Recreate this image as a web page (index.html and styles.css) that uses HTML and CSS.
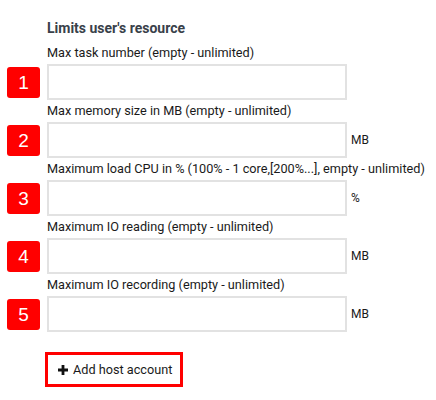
FILE: index.html
```html
<!DOCTYPE html>
<html lang="en">

<head>
    <meta charset="UTF-8">
    <meta name="viewport" content="width=device-width, initial-scale=1.0">
    <title>limits</title>
    <link rel="stylesheet" href="styles.css">
</head>

<body>
    <div class="limits">
        <h4 class="limits-title">Limits user's resource</h4>

        <div class="field">
            <label class="field-label">Max task number (empty - unlimited)</label>
            <div class="field-row">
                <span class="mark">1</span>
                <input class="field-input" type="text">
            </div>
        </div>

        <div class="field">
            <label class="field-label">Max memory size in MB (empty - unlimited)</label>
            <div class="field-row">
                <span class="mark">2</span>
                <input class="field-input" type="text">
                <span class="unit">MB</span>
            </div>
        </div>

        <div class="field">
            <label class="field-label">Maximum load CPU in % (100% - 1 core,[200%...], empty - unlimited)</label>
            <div class="field-row">
                <span class="mark">3</span>
                <input class="field-input" type="text">
                <span class="unit">%</span>
            </div>
        </div>

        <div class="field">
            <label class="field-label">Maximum IO reading (empty - unlimited)</label>
            <div class="field-row">
                <span class="mark">4</span>
                <input class="field-input" type="text">
                <span class="unit">MB</span>
            </div>
        </div>

        <div class="field">
            <label class="field-label">Maximum IO recording (empty - unlimited)</label>
            <div class="field-row">
                <span class="mark">5</span>
                <input class="field-input" type="text">
                <span class="unit">MB</span>
            </div>
        </div>

        <button class="add-btn" type="button">
            <svg class="add-icon" width="10" height="10" viewBox="0 0 10 10">
                <path d="M3.6 0h2.8v3.6H10v2.8H6.4V10H3.6V6.4H0V3.6h3.6z" fill="#111" />
            </svg>
            Add host account
        </button>
    </div>
</body>

</html>
```

FILE: styles.css
```css
* {
    padding: 0;
    margin: 0;
    box-sizing: border-box;
}

body {
    background: #fff;
    font-family: Roboto, "Liberation Sans", sans-serif;
    font-size: 12.7px;
    color: #1a1a1a;
}

.limits {
    padding: 18px 0 0 7px;
}

.limits-title {
    margin-left: 40px;
    margin-bottom: 4px;
    font-size: 14px;
    line-height: 20px;
    font-weight: 700;
    color: #39414a;
}

.field {
    padding-top: 2px;
}

.field-label {
    display: block;
    margin-left: 40px;
    margin-bottom: 2px;
    line-height: 18px;
    white-space: nowrap;
}

.field-row {
    display: flex;
    align-items: center;
}

.mark {
    width: 33px;
    height: 31px;
    margin-right: 7px;
    border-radius: 3px;
    background: #ff0000;
    color: #fff;
    font-family: "Liberation Sans", Arial, sans-serif;
    font-size: 19px;
    line-height: 31px;
    text-align: center;
}

.field-input {
    width: 300px;
    height: 36px;
    border: 2px solid #e2e2e2;
    background: #fff;
    outline: none;
}

.unit {
    margin-left: 4px;
    font-size: 12px;
}

.add-btn {
    display: flex;
    align-items: center;
    gap: 5px;
    width: 138px;
    height: 35px;
    margin: 20px 0 0 38px;
    padding-left: 10px;
    border: 3px solid #ff0000;
    background: #fff;
    font-family: Roboto, "Liberation Sans", sans-serif;
    font-size: 12.7px;
    color: #1a1a1a;
    cursor: pointer;
}
```
